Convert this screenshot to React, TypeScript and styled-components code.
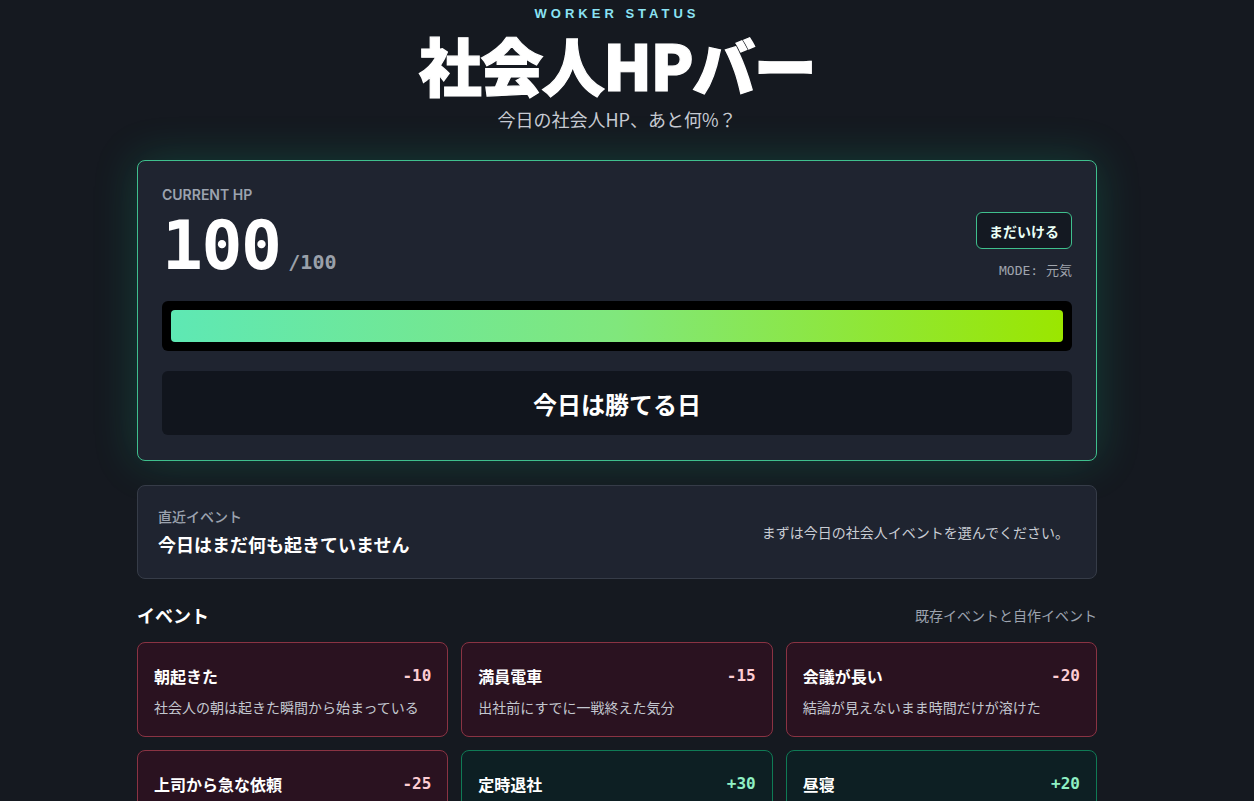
import styled, { createGlobalStyle } from 'styled-components';

const GlobalStyle = createGlobalStyle`
  html, body {
    margin: 0;
    padding: 0;
    background: #151920;
  }
  body {
    font-family: "Noto Sans CJK JP", "Noto Sans", sans-serif;
    color: #f3f4f6;
    padding-right: 20px;
  }
  * { box-sizing: border-box; }
`;

const MONO = `"DejaVu Sans Mono", "Liberation Mono", "Noto Sans CJK JP", monospace`;

const Page = styled.div`
  width: 960px;
  margin: 0 auto;
  padding: 4px 0 40px;
`;

const Header = styled.header`
  display: flex;
  flex-direction: column;
  align-items: center;
  margin-bottom: 28px;
`;

const Eyebrow = styled.div`
  font-family: "Liberation Sans", Arial, sans-serif;
  font-weight: 700;
  font-size: 13px;
  letter-spacing: 4px;
  color: #8be3f4;
  line-height: 18px;
  margin-top: 1px;
`;

const Title = styled.h1`
  margin: 5px 0 4px;
  font-size: 63px;
  font-weight: 900;
  line-height: 72px;
  letter-spacing: -1.5px;
  color: #ffffff;
  -webkit-text-stroke: 1.2px #ffffff;
`;

const Subtitle = styled.p`
  margin: 2px 0 0;
  font-size: 18px;
  line-height: 26px;
  color: #c6cad2;
`;

const HpCard = styled.section`
  background: #1f2430;
  border: 1px solid #3fbf8d;
  border-radius: 8px;
  padding: 24px 24px 25px;
  box-shadow: 0 0 44px rgba(16, 185, 129, 0.24);
  display: flex;
  flex-direction: column;
`;

const HpTop = styled.div`
  display: flex;
  justify-content: space-between;
  align-items: flex-end;
`;

const Label = styled.div`
  font-family: "Inter", "Noto Sans", sans-serif;
  font-weight: 600;
  font-size: 14px;
  line-height: 20px;
  color: #9ca3af;
`;

const HpRow = styled.div`
  display: flex;
  align-items: baseline;
  gap: 8px;
  margin-top: 2px;
`;

const HpValue = styled.span`
  font-family: ${MONO};
  font-weight: 700;
  font-size: 68px;
  line-height: 78px;
  color: #ffffff;
  letter-spacing: -1.5px;
`;

const HpMax = styled.span`
  font-family: ${MONO};
  font-weight: 700;
  font-size: 20px;
  color: #9aa0aa;
`;

const Status = styled.div`
  display: flex;
  flex-direction: column;
  align-items: flex-end;
  gap: 14px;
  padding-bottom: 6px;
`;

const Badge = styled.div`
  border: 1px solid #3fbf8d;
  background: #141922;
  border-radius: 6px;
  padding: 0 12px;
  height: 37px;
  display: flex;
  align-items: center;
  font-weight: 700;
  font-size: 14px;
  color: #eafff6;
`;

const Mode = styled.div`
  font-family: ${MONO};
  font-size: 13px;
  color: #a0a5ae;
  line-height: 16px;
`;

const BarTrack = styled.div`
  margin-top: 16px;
  background: #000000;
  border-radius: 6px;
  padding: 9px;
  height: 50px;
`;

const BarFill = styled.div`
  height: 100%;
  border-radius: 4px;
  background: linear-gradient(90deg, #5ee8b4 0%, #80e77c 50%, #9be600 100%);
`;

const Verdict = styled.div`
  margin-top: 20px;
  height: 64px;
  background: #11151d;
  border-radius: 6px;
  display: flex;
  align-items: center;
  justify-content: center;
  font-size: 24px;
  font-weight: 700;
  color: #ffffff;
`;

const LastEvent = styled.section`
  margin-top: 24px;
  background: #1f2430;
  border: 1px solid #363c48;
  border-radius: 8px;
  height: 94px;
  padding: 0 27px 0 20px;
  display: flex;
  align-items: center;
  justify-content: space-between;
`;

const LastLabel = styled.div`
  font-size: 14px;
  font-weight: 500;
  color: #9ca3af;
  line-height: 20px;
`;

const LastTitle = styled.div`
  font-size: 18px;
  font-weight: 700;
  color: #ffffff;
  line-height: 28px;
  margin-top: 4px;
`;

const Hint = styled.div`
  font-size: 14px;
  color: #c9cdd4;
`;

const SectionHead = styled.div`
  margin-top: 24px;
  display: flex;
  justify-content: space-between;
  align-items: center;
  height: 24px;
`;

const SectionTitle = styled.h2`
  margin: 0;
  font-size: 18px;
  font-weight: 700;
  color: #ffffff;
`;

const SectionNote = styled.div`
  font-size: 14px;
  color: #9ca3af;
`;

const Grid = styled.div`
  margin-top: 15px;
  display: grid;
  grid-template-columns: repeat(3, 1fr);
  gap: 13px;
`;

const EventCard = styled.div<{ $good: boolean }>`
  border-radius: 8px;
  border: 1px solid ${p => (p.$good ? '#0f7a55' : '#8a3343')};
  background: ${p => (p.$good ? '#0d1f23' : '#2a1220')};
  padding: 21px 16px 20px;
  height: 95px;
  cursor: pointer;
`;

const CardTop = styled.div`
  display: flex;
  justify-content: space-between;
  align-items: center;
  line-height: 24px;
`;

const CardName = styled.span`
  font-size: 16px;
  font-weight: 700;
  color: #ffffff;
`;

const CardDelta = styled.span<{ $good: boolean }>`
  font-family: ${MONO};
  font-weight: 700;
  font-size: 16px;
  color: ${p => (p.$good ? '#8ff0c4' : '#fecdd3')};
`;

const CardDesc = styled.div`
  margin-top: 9px;
  font-size: 14px;
  line-height: 20px;
  color: #c3c7cf;
`;

const events = [
  { name: '朝起きた', delta: -10, desc: '社会人の朝は起きた瞬間から始まっている' },
  { name: '満員電車', delta: -15, desc: '出社前にすでに一戦終えた気分' },
  { name: '会議が長い', delta: -20, desc: '結論が見えないまま時間だけが溶けた' },
  { name: '上司から急な依頼', delta: -25, desc: '定時前に降ってくる「ちょっといい？」' },
  { name: '定時退社', delta: 30, desc: '今日は自分の時間を取り戻した' },
  { name: '昼寝', delta: 20, desc: '15分のパワーナップで回復' },
];

export default function App() {
  return (
    <>
      <GlobalStyle />
      <Page>
        <Header>
          <Eyebrow>WORKER STATUS</Eyebrow>
          <Title>社会人HPバー</Title>
          <Subtitle>今日の社会人HP、あと何%？</Subtitle>
        </Header>

        <HpCard>
          <HpTop>
            <div>
              <Label>CURRENT HP</Label>
              <HpRow>
                <HpValue>100</HpValue>
                <HpMax>/100</HpMax>
              </HpRow>
            </div>
            <Status>
              <Badge>まだいける</Badge>
              <Mode>MODE: 元気</Mode>
            </Status>
          </HpTop>
          <BarTrack>
            <BarFill style={{ width: '100%' }} />
          </BarTrack>
          <Verdict>今日は勝てる日</Verdict>
        </HpCard>

        <LastEvent>
          <div>
            <LastLabel>直近イベント</LastLabel>
            <LastTitle>今日はまだ何も起きていません</LastTitle>
          </div>
          <Hint>まずは今日の社会人イベントを選んでください。</Hint>
        </LastEvent>

        <SectionHead>
          <SectionTitle>イベント</SectionTitle>
          <SectionNote>既存イベントと自作イベント</SectionNote>
        </SectionHead>

        <Grid>
          {events.map(e => {
            const good = e.delta > 0;
            return (
              <EventCard key={e.name} $good={good}>
                <CardTop>
                  <CardName>{e.name}</CardName>
                  <CardDelta $good={good}>{good ? `+${e.delta}` : e.delta}</CardDelta>
                </CardTop>
                <CardDesc>{e.desc}</CardDesc>
              </EventCard>
            );
          })}
        </Grid>
      </Page>
    </>
  );
}
